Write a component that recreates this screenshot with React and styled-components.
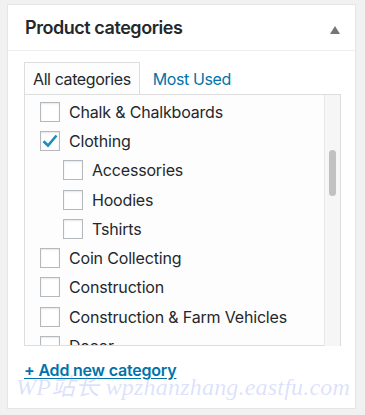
import styled, { createGlobalStyle } from "styled-components";

const GlobalStyle = createGlobalStyle`
  html, body {
    margin: 0;
    padding: 0;
    background: #f1f1f1;
  }
  body {
    font-family: Inter, "Liberation Sans", sans-serif;
    color: #23282d;
  }
`;

const categories = [
  { name: "Chalk & Chalkboards" },
  { name: "Clothing", checked: true },
  { name: "Accessories", child: true },
  { name: "Hoodies", child: true },
  { name: "Tshirts", child: true },
  { name: "Coin Collecting" },
  { name: "Construction" },
  { name: "Construction & Farm Vehicles" },
  { name: "Decor" },
];

export default function App() {
  return (
    <>
      <GlobalStyle />
      <Panel>
        <Header>
          <Title>Product categories</Title>
          <Toggle aria-label="Toggle panel" />
        </Header>
        <Body>
          <Tabs>
            <Tab $active>All categories</Tab>
            <Tab>Most Used</Tab>
          </Tabs>
          <ListBox>
            <List>
              {categories.map((c) => (
                <Row key={c.name} $child={c.child}>
                  <Checkbox>
                    {c.checked && (
                      <svg width="16" height="14" viewBox="0 0 16 14">
                        <path d="M1.5 7.2 L6 11.5 L14.5 1.5" fill="none" stroke="#1e8cbe" strokeWidth="2.6" />
                      </svg>
                    )}
                  </Checkbox>
                  <Label>{c.name}</Label>
                </Row>
              ))}
            </List>
            <Track>
              <Thumb />
            </Track>
          </ListBox>
          <AddLink href="#">+ Add new category</AddLink>
          <Watermark>WP站长 wpzhanzhang.eastfu.com</Watermark>
        </Body>
      </Panel>
    </>
  );
}

const Panel = styled.div`
  box-sizing: border-box;
  width: 349px;
  height: 405px;
  margin: 4px 0 0 7px;
  background: #fff;
  border: 1px solid #e5e5e5;
  box-shadow: 0 1px 1px rgba(0, 0, 0, 0.04);
`;

const Header = styled.div`
  display: flex;
  align-items: center;
  justify-content: space-between;
  height: 45px;
  padding: 0 15px 0 17px;
  border-bottom: 1px solid #eee;
`;

const Title = styled.h2`
  margin: 0;
  font-size: 18px;
  font-weight: 600;
  letter-spacing: -0.45px;
  color: #23282d;
`;

const Toggle = styled.span`
  width: 0;
  height: 0;
  margin-top: 4px;
  border-left: 5px solid transparent;
  border-right: 5px solid transparent;
  border-bottom: 8px solid #72777c;
`;

const Body = styled.div`
  position: relative;
  padding: 11px 14px 0 16px;
`;

const Tabs = styled.div`
  display: flex;
  align-items: stretch;
  gap: 4px;
  height: 32px;
`;

const Tab = styled.div`
  display: flex;
  align-items: center;
  padding: 0 8px;
  font-size: 16px;
  letter-spacing: -0.4px;
  color: ${(p) => (p.$active ? "#23282d" : "#0073aa")};
  border: 1px solid ${(p) => (p.$active ? "#ddd" : "transparent")};
  border-bottom: none;
  background: ${(p) => (p.$active ? "#fdfdfd" : "transparent")};
`;

const ListBox = styled.div`
  display: flex;
  height: 251px;
  border: 1px solid #ddd;
  border-bottom: none;
`;

const List = styled.div`
  flex: 1;
  overflow: hidden;
  background: #fdfdfd;
  border-bottom: 1px solid #ddd;
  padding: 2px 0 0 15px;
`;

const Row = styled.div`
  display: flex;
  align-items: center;
  height: 29.3px;
  padding-left: ${(p) => (p.$child ? "23px" : "0")};
`;

const Checkbox = styled.span`
  box-sizing: border-box;
  display: flex;
  align-items: center;
  justify-content: center;
  width: 20px;
  height: 20px;
  flex-shrink: 0;
  border: 1px solid #b4b9be;
  background: #fff;
  box-shadow: inset 0 1px 2px rgba(0, 0, 0, 0.1);
  margin-right: 9px;
`;

const Label = styled.span`
  font-size: 16px;
  letter-spacing: -0.18px;
  color: #23282d;
  white-space: nowrap;
`;

const Track = styled.div`
  width: 15px;
  flex-shrink: 0;
  background: #f6f6f6;
  border-left: 1px solid #e8e8e8;
  padding-top: 55px;
  display: flex;
  justify-content: center;
`;

const Thumb = styled.div`
  width: 7px;
  height: 46px;
  border-radius: 4px;
  background: #c1c1c1;
`;

const AddLink = styled.a`
  display: inline-block;
  margin-top: 14px;
  font-size: 16px;
  font-weight: 600;
  letter-spacing: -0.2px;
  color: #0073aa;
  text-decoration: underline;
  text-underline-offset: 2px;
`;

const Watermark = styled.div`
  position: absolute;
  left: 8px;
  top: 316px;
  font-family: "Liberation Serif", "Noto Sans CJK SC", serif;
  font-style: italic;
  font-size: 24px;
  letter-spacing: 0.2px;
  color: rgba(130, 150, 245, 0.28);
  white-space: nowrap;
  pointer-events: none;
`;
